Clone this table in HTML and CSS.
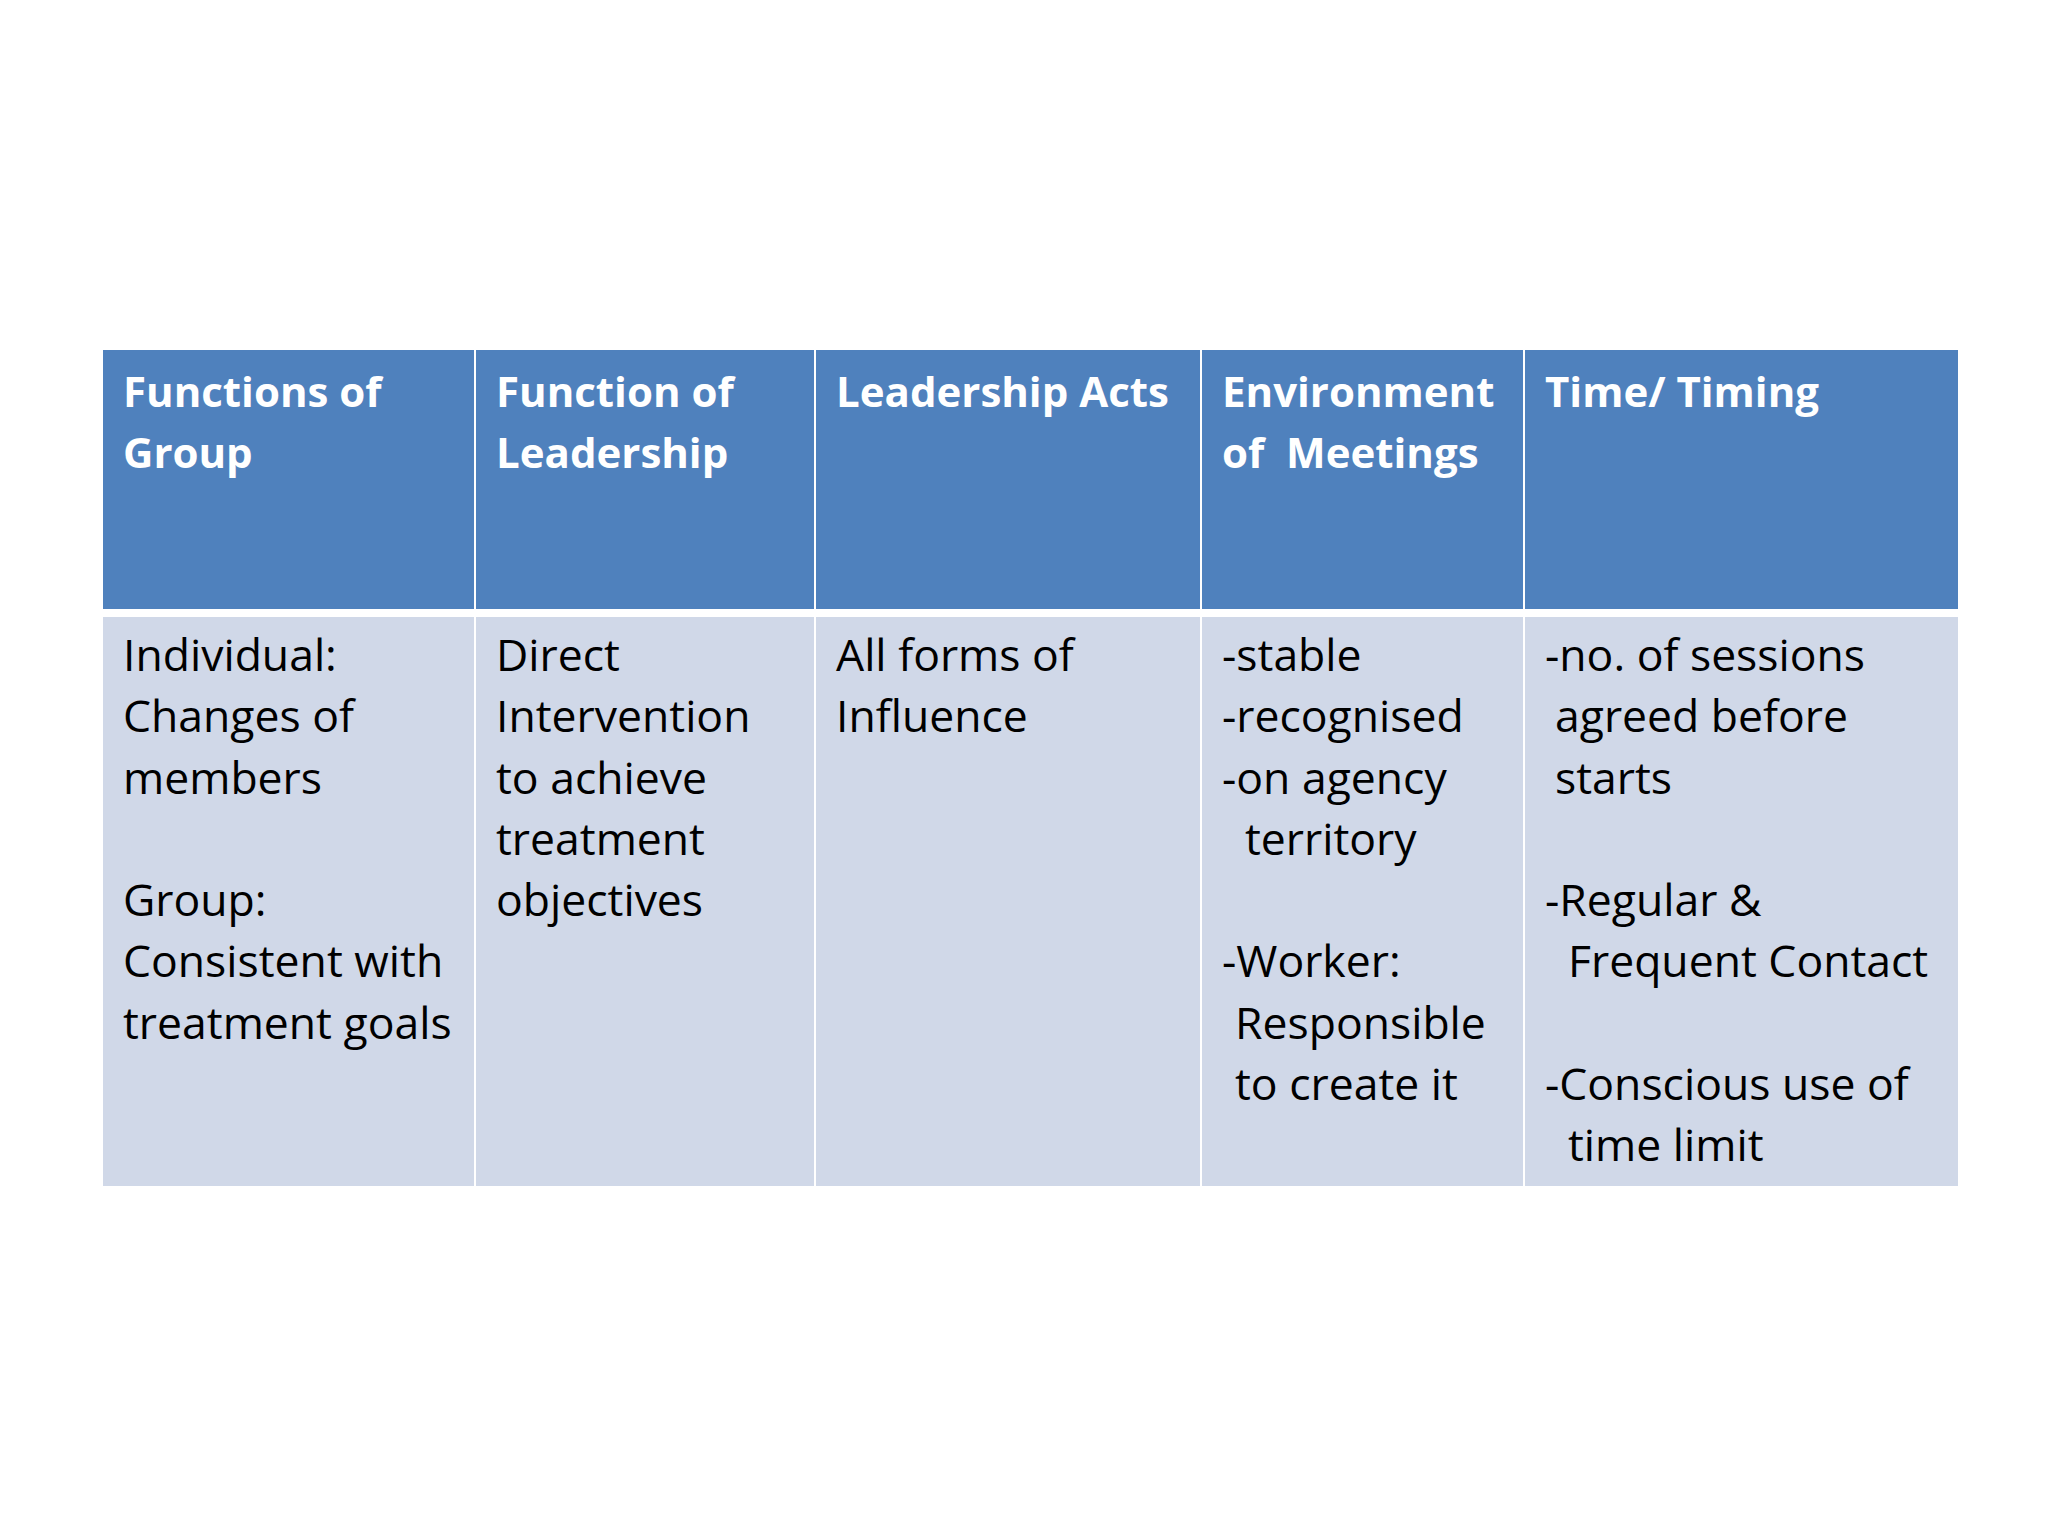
FILE: index.html
```html
<!DOCTYPE html>
<html>
<head>
<meta charset="utf-8">
<link rel="stylesheet" href="styles.css">
</head>
<body>
<div class="slide">
  <div class="table">
    <div class="cell head"><div>Functions of</div><div>Group</div></div>
    <div class="cell head"><div>Function of</div><div>Leadership</div></div>
    <div class="cell head"><div>Leadership Acts</div></div>
    <div class="cell head"><div>Environment</div><div class="pre">of  Meetings</div></div>
    <div class="cell head"><div>Time/ Timing</div></div>

    <div class="cell body">
      <div>Individual:</div>
      <div>Changes of</div>
      <div>members</div>
      <div class="blank"></div>
      <div>Group:</div>
      <div>Consistent with</div>
      <div>treatment goals</div>
    </div>
    <div class="cell body">
      <div>Direct</div>
      <div>Intervention</div>
      <div>to achieve</div>
      <div>treatment</div>
      <div>objectives</div>
    </div>
    <div class="cell body">
      <div>All forms of</div>
      <div>Influence</div>
    </div>
    <div class="cell body">
      <div>-stable</div>
      <div>-recognised</div>
      <div>-on agency</div>
      <div class="ind2">territory</div>
      <div class="blank"></div>
      <div>-Worker:</div>
      <div class="ind1">Responsible</div>
      <div class="ind1">to create it</div>
    </div>
    <div class="cell body">
      <div>-no. of sessions</div>
      <div class="ind0">agreed before</div>
      <div class="ind0">starts</div>
      <div class="blank"></div>
      <div>-Regular &amp;</div>
      <div class="ind2">Frequent Contact</div>
      <div class="blank"></div>
      <div>-Conscious use of</div>
      <div class="ind2">time limit</div>
    </div>
  </div>
</div>
</body>
</html>
```

FILE: styles.css
```css
html, body {
  margin: 0;
  padding: 0;
  background: #ffffff;
}

.slide {
  width: 2048px;
  height: 1536px;
  box-sizing: border-box;
  padding: 350px 0 0 103px;
  background: #ffffff;
}

.table {
  display: grid;
  grid-template-columns: 371px 338px 384px 321px 433px;
  grid-template-rows: 259px 569px;
  column-gap: 2px;
  row-gap: 8px;
  width: 1855px;
  background: #ffffff;
  font-family: "Open Sans", "Liberation Sans", sans-serif;
}

.cell {
  box-sizing: border-box;
  padding-left: 20px;
  padding-right: 4px;
  white-space: nowrap;
}

.head {
  background: #4f81bd;
  color: #ffffff;
  font-weight: 700;
  font-size: 42px;
  line-height: 61px;
  padding-top: 10px;
}

.body {
  background: #d0d8e8;
  color: #000000;
  font-size: 44.5px;
  line-height: 61.3px;
  padding-top: 6px;
}

.pre {
  white-space: pre;
}

.blank {
  height: 61.3px;
}

.ind0 {
  padding-left: 10px;
}

.ind1 {
  padding-left: 13px;
}

.ind2 {
  padding-left: 23px;
}
```
